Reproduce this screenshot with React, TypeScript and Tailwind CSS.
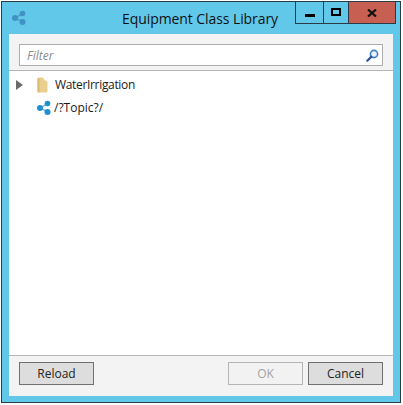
const font = "[font-family:'Open_Sans',sans-serif]";

function NodesIcon({ dark }: { dark?: boolean }) {
  const fill = dark ? "#3f93c4" : "#1f8fd0";
  return (
    <svg width="16" height="16" viewBox="0 0 16 16">
      <path d="M4 8 L11 4 M4 8 L11 11.5" stroke={dark ? "#4f8fb8" : "#5aa5d2"} strokeWidth="1.2" fill="none" />
      <circle cx="4" cy="8" r="3" fill={fill} />
      <circle cx="11.5" cy="3.5" r="2.8" fill={fill} />
      <circle cx="11.5" cy="12" r="3" fill={fill} />
    </svg>
  );
}

function FolderIcon() {
  return (
    <svg width="11" height="16" viewBox="0 0 11 16">
      <path d="M0.5 1.5 Q0.5 0.5 1.5 0.5 L5.500 0.500 Q6.500 0.500 7 2 L7.500 3 Q8 3.500 9.500 4 Q10.500 4.500 10.500 6 L10.500 14 Q10.500 15.500 9 15.500 L1.500 15.500 Q0.500 15.500 0.500 14.500 Z" fill="#e8cf8d" />
      <path d="M0.500 1.500 L2.500 1.500 L2.500 15.500 L1.500 15.500 Q0.500 15.500 0.500 14.500 Z" fill="#d9bb6e" />
    </svg>
  );
}

function SearchIcon() {
  return (
    <svg width="13" height="13" viewBox="0 0 13 13">
      <circle cx="8" cy="5" r="3.600" fill="#eaf2fb" stroke="#3f7fc4" strokeWidth="1.600" />
      <path d="M5.300 7.700 L1.300 11.700" stroke="#2a4f96" strokeWidth="2.200" strokeLinecap="round" />
    </svg>
  );
}

function DialogButton({ label, disabled }: { label: string; disabled?: boolean }) {
  return (
    <button
      className={
        disabled
          ? "w-[75px] h-[23px] border border-[#b5b5b5] bg-[#f2f2f2] text-[#a3a3a3] text-[12px] leading-none"
          : "w-[75px] h-[23px] border border-[#707070] bg-[#dddddd] text-[#222222] text-[12px] leading-none"
      }
    >
      {label}
    </button>
  );
}

export default function App() {
  return (
    <div className={`w-[403px] h-[405px] bg-white pt-px pl-px ${font}`}>
      <div className="w-[400px] h-[402px] border border-[#2b3b46] bg-[#62c8ea] flex flex-col">
        <div className="h-[32px] flex shrink-0">
          <div className="pl-[9px] pt-[8px] w-[40px] shrink-0">
            <NodesIcon dark />
          </div>
          <div className="flex-1 min-w-0 text-[14px] tracking-[-0.08px] leading-[20px] pt-[7px] pl-[80px] text-[#111111] whitespace-nowrap">
            Equipment Class Library
          </div>
          <div className="flex h-[22px] border border-t-0 border-[#2b3b46] mr-[4px] shrink-0">
            <div className="w-[28px] border-r border-[#2b3b46] flex items-center justify-center">
              <div className="w-[10px] h-[3px] bg-black mt-[5px]" />
            </div>
            <div className="w-[25px] border-r border-[#2b3b46] flex items-center justify-center">
              <div className="w-[10px] h-[8px] border-2 border-black mb-[1px]" />
            </div>
            <div className="w-[46px] bg-[#c75f52] flex items-center justify-center">
              <svg width="10" height="8" viewBox="0 0 10 8">
                <path d="M1 0.500 L9 7.500 M9 0.500 L1 7.500" stroke="#111111" strokeWidth="2.200" />
              </svg>
            </div>
          </div>
        </div>
        <div className="mx-[7px] flex-1 bg-white flex flex-col min-h-0">
          <div className="h-[37px] bg-[#f3f3f3] border-b border-[#b5b5b5] px-[10px] pt-[10px] shrink-0">
            <div className="h-[22px] bg-white border border-[#aeaeae] flex items-center justify-between pl-[7px] pr-[3px]">
              <span className="text-[12px] italic text-[#8a8a8a] mt-[1px]">Filter</span>
              <SearchIcon />
            </div>
          </div>
          <div className="flex-1 pt-[6px] text-[12px] text-[#1a1a1a]">
            <div className="flex items-center h-[16px] pl-[7px]">
              <div className="w-0 h-0 border-y-[5px] border-y-transparent border-l-[7px] border-l-[#6a6a6a]" />
              <div className="ml-[14px] w-[11px]">
                <FolderIcon />
              </div>
              <span className="ml-[7px] tracking-[-0.33px]">WaterIrrigation</span>
            </div>
            <div className="flex items-center h-[16px] mt-[7px] pl-[27px]">
              <NodesIcon />
              <span className="ml-[2px]">/?Topic?/</span>
            </div>
          </div>
          <div className="h-[41px] bg-[#f3f3f3] border-t border-[#b5b5b5] px-[10px] pt-[6px] flex shrink-0">
            <DialogButton label="Reload" />
            <div className="flex-1" />
            <div className="flex gap-[5px]">
              <DialogButton label="OK" disabled />
              <DialogButton label="Cancel" />
            </div>
          </div>
        </div>
        <div className="h-[6px] shrink-0" />
      </div>
    </div>
  );
}
